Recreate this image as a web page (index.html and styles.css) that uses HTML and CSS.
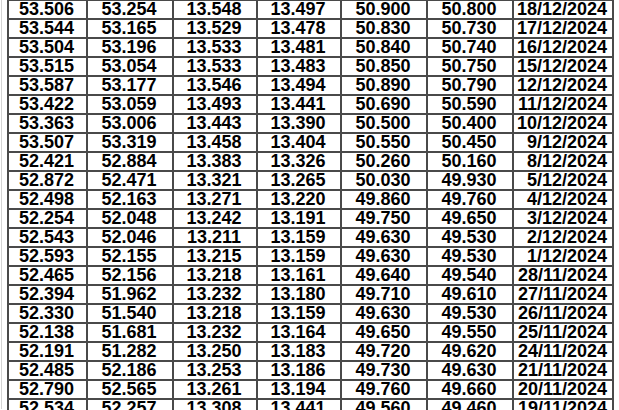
FILE: index.html
```html
<!DOCTYPE html>
<html>
<head>
<meta charset="utf-8">
<link rel="stylesheet" href="styles.css">
</head>
<body>
<div class="sheet">
<table class="grid">
<colgroup>
<col class="c1"><col class="c2"><col class="c3"><col class="c4"><col class="c5"><col class="c6"><col class="c7">
</colgroup>
<tbody>
<tr><td>53.506</td><td>53.254</td><td>13.548</td><td>13.497</td><td>50.900</td><td>50.800</td><td class="date">18/12/2024</td></tr>
<tr><td>53.544</td><td>53.165</td><td>13.529</td><td>13.478</td><td>50.830</td><td>50.730</td><td class="date">17/12/2024</td></tr>
<tr><td>53.504</td><td>53.196</td><td>13.533</td><td>13.481</td><td>50.840</td><td>50.740</td><td class="date">16/12/2024</td></tr>
<tr><td>53.515</td><td>53.054</td><td>13.533</td><td>13.483</td><td>50.850</td><td>50.750</td><td class="date">15/12/2024</td></tr>
<tr><td>53.587</td><td>53.177</td><td>13.546</td><td>13.494</td><td>50.890</td><td>50.790</td><td class="date">12/12/2024</td></tr>
<tr><td>53.422</td><td>53.059</td><td>13.493</td><td>13.441</td><td>50.690</td><td>50.590</td><td class="date">11/12/2024</td></tr>
<tr><td>53.363</td><td>53.006</td><td>13.443</td><td>13.390</td><td>50.500</td><td>50.400</td><td class="date">10/12/2024</td></tr>
<tr><td>53.507</td><td>53.319</td><td>13.458</td><td>13.404</td><td>50.550</td><td>50.450</td><td class="date">9/12/2024</td></tr>
<tr><td>52.421</td><td>52.884</td><td>13.383</td><td>13.326</td><td>50.260</td><td>50.160</td><td class="date">8/12/2024</td></tr>
<tr><td>52.872</td><td>52.471</td><td>13.321</td><td>13.265</td><td>50.030</td><td>49.930</td><td class="date">5/12/2024</td></tr>
<tr><td>52.498</td><td>52.163</td><td>13.271</td><td>13.220</td><td>49.860</td><td>49.760</td><td class="date">4/12/2024</td></tr>
<tr><td>52.254</td><td>52.048</td><td>13.242</td><td>13.191</td><td>49.750</td><td>49.650</td><td class="date">3/12/2024</td></tr>
<tr><td>52.543</td><td>52.046</td><td>13.211</td><td>13.159</td><td>49.630</td><td>49.530</td><td class="date">2/12/2024</td></tr>
<tr><td>52.593</td><td>52.155</td><td>13.215</td><td>13.159</td><td>49.630</td><td>49.530</td><td class="date">1/12/2024</td></tr>
<tr><td>52.465</td><td>52.156</td><td>13.218</td><td>13.161</td><td>49.640</td><td>49.540</td><td class="date">28/11/2024</td></tr>
<tr><td>52.394</td><td>51.962</td><td>13.232</td><td>13.180</td><td>49.710</td><td>49.610</td><td class="date">27/11/2024</td></tr>
<tr><td>52.330</td><td>51.540</td><td>13.218</td><td>13.159</td><td>49.630</td><td>49.530</td><td class="date">26/11/2024</td></tr>
<tr><td>52.138</td><td>51.681</td><td>13.232</td><td>13.164</td><td>49.650</td><td>49.550</td><td class="date">25/11/2024</td></tr>
<tr><td>52.191</td><td>51.282</td><td>13.250</td><td>13.183</td><td>49.720</td><td>49.620</td><td class="date">24/11/2024</td></tr>
<tr><td>52.485</td><td>52.186</td><td>13.253</td><td>13.186</td><td>49.730</td><td>49.630</td><td class="date">21/11/2024</td></tr>
<tr><td>52.790</td><td>52.565</td><td>13.261</td><td>13.194</td><td>49.760</td><td>49.660</td><td class="date">20/11/2024</td></tr>
<tr><td>52.534</td><td>52.257</td><td>13.308</td><td>13.441</td><td>49.560</td><td>49.460</td><td class="date">19/11/2024</td></tr>
</tbody>
</table>
</div>
</body>
</html>
```
FILE: styles.css
```css
html, body {
  margin: 0;
  padding: 0;
  height: 410px;
  overflow: hidden;
  background: #fff;
}
.sheet {
  margin-left: 1px;
  padding-left: 5px;
  border-left: 1px solid #d4d4d4;
  height: 410px;
  margin-top: -1px;
}
.grid {
  border-collapse: separate;
  border-spacing: 0;
  table-layout: fixed;
  width: 607px;
  border-top: 2px solid #4a4a4a;
  border-left: 2px solid #4a4a4a;
  font-family: "Liberation Sans", Arial, sans-serif;
  font-weight: bold;
  font-size: 18px;
  color: #000;
}
.c1 { width: 79px; }
.c2 { width: 86px; }
.c3 { width: 84px; }
.c4 { width: 84px; }
.c5 { width: 86px; }
.c6 { width: 86px; }
.c7 { width: 100px; }
.grid td {
  box-sizing: border-box;
  height: 19px;
  padding: 0 2px 0 0;
  line-height: 17px;
  text-align: center;
  vertical-align: middle;
  border-right: 2px solid #4a4a4a;
  border-bottom: 2px solid #4a4a4a;
  white-space: nowrap;
}
.grid td.date {
  text-align: right;
  padding-right: 5px;
}
```
